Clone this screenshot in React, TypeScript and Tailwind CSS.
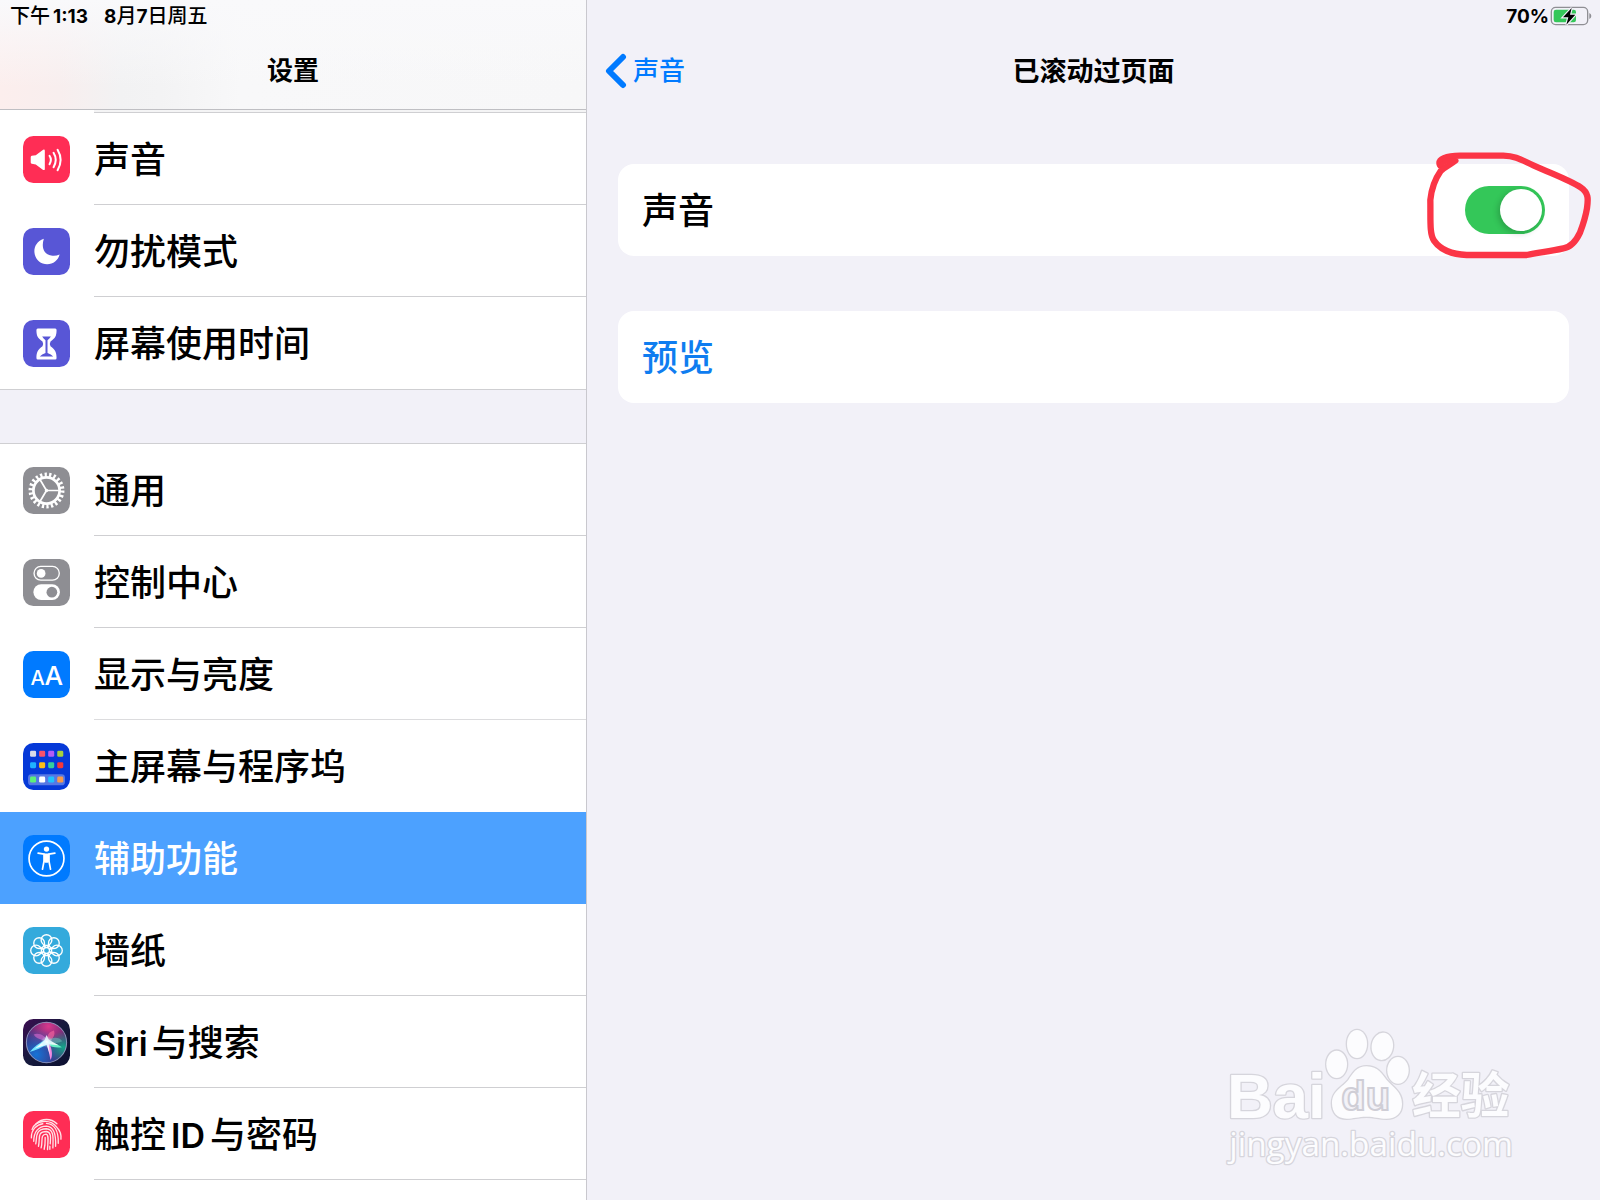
import { useState } from 'react';
import type { ReactNode } from 'react';

interface IconProps {
  color: string;
  children: ReactNode;
}

function IconTile({ color, children }: IconProps) {
  return (
    <svg viewBox="0 0 140 140" className="w-[47px] h-[47px] shrink-0" aria-hidden="true">
      <rect width="140" height="140" rx="31" fill={color} />
      {children}
    </svg>
  );
}

function SoundIcon() {
  return (
    <IconTile color="#ff2d55">
      <path d="M26 59L38 57L60 41Q65 39 65 44V98Q65 103 60 101L38 85L26 83Q23 82 23 79V63Q23 60 26 59Z" fill="#fff" />
      <path d="M79 59Q87 71 79 84M91 50Q104 71 91 93M103 41Q121 71 103 102" fill="none" stroke="#fff" strokeWidth="6" strokeLinecap="round" />
    </IconTile>
  );
}

function MoonIcon() {
  return (
    <IconTile color="#5856d6">
      <path d="M62 32C40 40 33 57 34 72C36 94 52 108 72 108C90 108 105 96 109 79C100 83 92 84 84 82C62 77 54 58 62 32Z" fill="#fff" />
    </IconTile>
  );
}

function HourglassIcon() {
  return (
    <IconTile color="#5856d6">
      <path d="M44 25H96Q100 25 100 30C100 48 96 54 82 64Q78 71 82 78C96 88 100 96 100 113Q100 118 96 118H44Q40 118 40 113C40 96 44 88 58 78Q62 71 58 64C44 54 40 48 40 30Q40 25 44 25Z" fill="#fff" />
      <path d="M57 49H83Q79 55 73 60V98Q84 101 90 109H50Q56 101 67 98V60Q61 55 57 49Z" fill="#5856d6" />
    </IconTile>
  );
}

function GearIcon() {
  return (
    <IconTile color="#8e8e93">
      <g fill="none" stroke="#fff">
        <circle cx="70" cy="70" r="47" strokeWidth="13" pathLength="44" strokeDasharray="1 1" />
        <circle cx="70" cy="70" r="39" strokeWidth="8" />
        <path d="M70 70H107M70 70L51 38M70 70L51 102" strokeWidth="5" />
      </g>
      <circle cx="70" cy="70" r="5" fill="#fff" />
    </IconTile>
  );
}

function ControlIcon() {
  return (
    <IconTile color="#8e8e93">
      <rect x="33" y="22" width="75" height="41" rx="20" fill="none" stroke="#fff" strokeWidth="4" />
      <circle cx="54" cy="43" r="13" fill="#fff" />
      <rect x="31" y="75" width="79" height="47" rx="23" fill="#fff" />
      <circle cx="86" cy="99" r="16" fill="#8e8e93" />
    </IconTile>
  );
}

function DisplayIcon() {
  return (
    <IconTile color="#007aff">
      <g fill="#fff" fontFamily="Inter, sans-serif" fontWeight="500">
        <text x="22" y="100" fontSize="60">A</text>
        <text x="64" y="100" fontSize="78">A</text>
      </g>
    </IconTile>
  );
}

const appColors = [
  ['#d9dbe8', '#f8526b', '#b45cf5', '#a6d13c'],
  ['#1fb2ff', '#fcbf16', '#35cf9b', '#f4383a'],
];
const dockColors = ['#5df178', '#ffffff', '#1fc2ff', '#f79a4c'];

function HomeScreenIcon() {
  return (
    <IconTile color="#0639d8">
      <rect x="15" y="93" width="110" height="33" rx="10" fill="#fff" fillOpacity="0.32" />
      {appColors.map((row, y) =>
        row.map((fill, x) => (
          <rect key={fill} x={21 + x * 27} y={23 + y * 34} width="18" height="18" rx="4" fill={fill} />
        ))
      )}
      {dockColors.map((fill, x) => (
        <rect key={fill} x={21 + x * 27} y="100" width="18" height="18" rx="4" fill={fill} />
      ))}
    </IconTile>
  );
}

function AccessibilityIcon() {
  return (
    <IconTile color="#007aff">
      <circle cx="70" cy="70" r="52" fill="none" stroke="#fff" strokeWidth="5" />
      <circle cx="70" cy="42" r="8" fill="#fff" />
      <path d="M45 54L63 57V76L58 102M95 54L77 57V76L82 102" fill="none" stroke="#fff" strokeWidth="5" strokeLinecap="round" strokeLinejoin="round" />
      <path d="M61 55H79V76L75 83H65L61 76Z" fill="#fff" />
    </IconTile>
  );
}

function WallpaperIcon() {
  return (
    <IconTile color="#34aadc">
      <g fill="none" stroke="#fff" strokeWidth="4">
        {[0, 45, 90, 135, 180, 225, 270, 315].map((angle) => (
          <g key={angle} transform={`rotate(${angle} 70 70)`}>
            <circle cx="70" cy="39" r="16" />
            <path d="M64 53Q64 60 67 62M76 53Q76 60 73 62" />
          </g>
        ))}
        <circle cx="70" cy="70" r="9" />
      </g>
    </IconTile>
  );
}

function SiriIcon() {
  return (
    <svg viewBox="0 0 140 140" className="w-[47px] h-[47px] shrink-0" aria-hidden="true">
      <defs>
        <linearGradient id="siriBack" x1="0" y1="0" x2="1" y2="1">
          <stop offset="0" stopColor="#3c0d51" />
          <stop offset="0.5" stopColor="#161a3d" />
          <stop offset="1" stopColor="#0c1030" />
        </linearGradient>
        <radialGradient id="siriPink" cx="0.55" cy="0.1" r="0.6">
          <stop offset="0" stopColor="#d8388c" />
          <stop offset="1" stopColor="#d8388c" stopOpacity="0" />
        </radialGradient>
        <radialGradient id="siriBlue" cx="0.25" cy="0.8" r="0.65">
          <stop offset="0" stopColor="#1673d6" />
          <stop offset="1" stopColor="#1673d6" stopOpacity="0" />
        </radialGradient>
        <radialGradient id="siriGreen" cx="0.92" cy="0.62" r="0.4">
          <stop offset="0" stopColor="#14a78b" />
          <stop offset="1" stopColor="#14a78b" stopOpacity="0" />
        </radialGradient>
        <radialGradient id="siriGlow">
          <stop offset="0" stopColor="#fff" />
          <stop offset="1" stopColor="#9fe9ff" stopOpacity="0" />
        </radialGradient>
      </defs>
      <rect width="140" height="140" rx="31" fill="url(#siriBack)" />
      <circle cx="70" cy="70" r="60" fill="#46246f" />
      <circle cx="70" cy="70" r="60" fill="url(#siriPink)" />
      <circle cx="70" cy="70" r="60" fill="url(#siriBlue)" />
      <circle cx="70" cy="70" r="60" fill="url(#siriGreen)" />
      <circle cx="70" cy="70" r="60" fill="none" stroke="#a9b4d6" strokeOpacity="0.75" strokeWidth="3" />
      <path d="M70 70C60 60 38 60 32 46C48 40 68 50 74 68Z" fill="#d86ad1" fillOpacity="0.6" />
      <path d="M72 68C70 50 76 38 92 34C98 48 88 58 78 70Z" fill="#f0629c" fillOpacity="0.7" />
      <path d="M72 64C90 52 108 54 117 66C104 72 90 72 76 72Z" fill="#6fd8c8" fillOpacity="0.45" />
      <path d="M66 62C48 72 32 84 20 98C38 94 56 84 74 76Z" fill="#6fe3ff" />
      <path d="M72 66C90 70 106 76 116 84C100 86 84 84 70 76Z" fill="#64efc4" />
      <path d="M70 72C75 86 78 104 82 122C90 108 86 88 78 72Z" fill="#f08ae0" />
      <path d="M70 48L77 62L106 78L77 75L80 106L70 77L36 88L64 64Z" fill="#fff" fillOpacity="0.85" />
      <circle cx="71" cy="68" r="18" fill="url(#siriGlow)" />
    </svg>
  );
}

function TouchIdIcon() {
  return (
    <IconTile color="#ff2d55">
      <g fill="none" stroke="#ffe3e8" strokeWidth="4" strokeLinecap="round">
        <path d="M39 38C57 21 83 21 101 38" />
        <path d="M27 55C37 27 81 22 101 49C112 60 114 74 113 84" />
        <path d="M25 80C24 55 42 40 59 38M70 37C92 38 106 58 105 96" />
        <path d="M32 90C32 62 46 45 70 45C90 46 99 64 97 105" />
        <path d="M38 98C42 82 34 53 70 53C93 55 90 80 89 110" />
        <path d="M46 105C52 82 40 61 70 61C86 63 82 84 81 98M80 105V114" />
        <path d="M54 110C60 90 50 70 69 69C78 71 74 92 73 115" />
        <path d="M63 114C67 98 66 90 66 79" />
      </g>
    </IconTile>
  );
}

interface SettingItem {
  label: ReactNode;
  icon: ReactNode;
  line: string;
  selected?: boolean;
}

const alertItems: SettingItem[] = [
  { label: '声音', icon: <SoundIcon />, line: 'border-[#cfcfd2]' },
  { label: '勿扰模式', icon: <MoonIcon />, line: 'border-[#cfcfd2]' },
  { label: '屏幕使用时间', icon: <HourglassIcon />, line: 'border-transparent' },
];

const generalItems: SettingItem[] = [
  { label: '通用', icon: <GearIcon />, line: 'border-[#cfcfd2]' },
  { label: '控制中心', icon: <ControlIcon />, line: 'border-[#cfcfd2]' },
  { label: '显示与亮度', icon: <DisplayIcon />, line: 'border-[#dcdcde]' },
  { label: '主屏幕与程序坞', icon: <HomeScreenIcon />, line: 'border-transparent' },
  { label: '辅助功能', icon: <AccessibilityIcon />, line: 'border-transparent', selected: true },
  { label: '墙纸', icon: <WallpaperIcon />, line: 'border-[#cfcfd2]' },
  {
    label: <><span className="mr-1 text-[34px] font-semibold">Siri</span>与搜索</>,
    icon: <SiriIcon />,
    line: 'border-[#cfcfd2]',
  },
  {
    label: <>触控<span className="mx-[5px] text-[34px] font-semibold">ID</span>与密码</>,
    icon: <TouchIdIcon />,
    line: 'border-[#cfcfd2]',
  },
];

function SettingRow({ item }: { item: SettingItem }) {
  return (
    <li>
      <a
        href="#"
        aria-current={item.selected ? 'page' : undefined}
        className={`flex h-[92px] items-center gap-6 pl-[23px] ${item.selected ? 'bg-[#4ca1ff] text-white' : 'bg-white text-black'}`}
      >
        {item.icon}
        <span className={`flex h-full flex-1 items-center border-b pt-0.5 text-[36px] leading-none ${item.line}`}>
          <span>{item.label}</span>
        </span>
      </a>
    </li>
  );
}

function Battery() {
  return (
    <svg viewBox="0 0 126 60" className="h-5 w-[42px]" aria-hidden="true">
      <rect x="4" y="4" width="109" height="52" rx="13" fill="none" stroke="#8f8f94" strokeWidth="4" />
      <path d="M118 21Q124 24 124 30Q124 36 118 39Z" fill="#8f8f94" />
      <rect x="11" y="11" width="67" height="38" rx="7" fill="#34c759" />
      <path d="M65 6L39 34H55L49 56L76 26H60Z" fill="#000" stroke="#f2f1f8" strokeWidth="7" paintOrder="stroke" />
    </svg>
  );
}

function Watermark() {
  return (
    <svg
      viewBox="60 60 900 450"
      className="pointer-events-none absolute right-20 bottom-[30px] h-[150px] w-[300px]"
      role="img"
      aria-label="Baidu 经验"
    >
      <g fill="#fcfcfe" stroke="#d6d5dc" strokeWidth="8" paintOrder="stroke" strokeLinejoin="round">
        <text x="81" y="353" fontSize="190" fontWeight="700" fontFamily="'Liberation Sans', sans-serif">Bai</text>
        <ellipse cx="410" cy="193" rx="31" ry="41" />
        <ellipse cx="471" cy="132" rx="30" ry="42" />
        <ellipse cx="547" cy="139" rx="32" ry="41" transform="rotate(8 547 139)" />
        <ellipse cx="594" cy="211" rx="32" ry="40" />
        <path d="M500 199C535 199 548 225 560 240C580 262 606 276 606 312C606 340 588 356 560 356C535 356 525 350 500 350C475 350 460 356 440 356C412 356 396 338 396 310C396 272 428 262 445 240C458 222 468 199 500 199Z" />
        <text x="636" y="338" fontSize="146" fontWeight="700" fontFamily="'Noto Sans CJK SC', sans-serif">经验</text>
        <text x="88" y="467" fontSize="100" fontFamily="'Open Sans', sans-serif">jingyan.baidu.com</text>
      </g>
      <text x="424" y="331" fontSize="120" fontWeight="700" fontFamily="'Liberation Sans', sans-serif" fill="#f3f2f8" stroke="#cfced6" strokeWidth="6">du</text>
    </svg>
  );
}

export default function App() {
  const [soundOn, setSoundOn] = useState(true);

  return (
    <div className="flex min-h-screen bg-[#f2f1f8] font-['Inter','Noto_Sans_CJK_SC',sans-serif] font-medium text-black">
      <aside className="flex w-[587px] shrink-0 flex-col border-r border-[#c9c8ce]">
        <header className="h-[110px] border-b border-[#bfbfc3] bg-[linear-gradient(180deg,#f9f9fb_0%,#f9f9fb00_80%),linear-gradient(90deg,#fceeed_0px,#f8eeee_60px,#f2f2f3_120px,#f3f3f4_160px,#f8f8f9_240px,#f7f7f8_100%)]">
          <div className="flex h-8 items-center gap-4 pl-[10px] text-[20px] leading-none">
            <span>下午<span className="ml-[3px] text-[19px] font-bold">1:13</span></span>
            <span>
              <span className="text-[19px] font-bold">8</span>月<span className="text-[19px] font-bold">7</span>日周五
            </span>
          </div>
          <h1 className="flex h-[78px] items-center justify-center text-[26px] leading-none font-semibold">设置</h1>
        </header>
        <nav className="flex flex-1 flex-col bg-white" aria-label="设置">
          <div className="ml-[94px] h-[3px] border-b border-[#cfcfd2] bg-[#f4f4f5]" />
          <ul>
            {alertItems.map((item, i) => (
              <SettingRow key={i} item={item} />
            ))}
          </ul>
          <div className="h-[55px] border-y border-[#cfcfd2] bg-[#f2f1f8]" />
          <ul>
            {generalItems.map((item, i) => (
              <SettingRow key={i} item={item} />
            ))}
          </ul>
        </nav>
      </aside>

      <main className="relative flex flex-1 flex-col">
        <div className="flex h-8 items-center justify-end gap-px pr-2 text-[19px] leading-none font-bold">
          <span>70%</span>
          <Battery />
        </div>
        <header className="grid h-[78px] grid-cols-[1fr_auto_1fr] items-center px-[18px] text-[27px] leading-none">
          <button type="button" className="flex items-center gap-1 justify-self-start text-[26px] text-[#007aff]">
            <svg viewBox="0 0 24 38" className="h-[38px] w-6" fill="none" stroke="currentColor" strokeWidth="6" strokeLinecap="round" strokeLinejoin="round" aria-hidden="true">
              <path d="M18 5L4 19L18 33" />
            </svg>
            声音
          </button>
          <h2 className="font-semibold">已滚动过页面</h2>
        </header>

        <div className="flex flex-col gap-[55px] px-[31px] pt-[54px]">
          <div className="relative flex h-[92px] items-center justify-between rounded-2xl bg-white px-6 text-[36px] leading-none">
            <label htmlFor="page-sound" className="pt-0.5">声音</label>
            <input
              id="page-sound"
              type="checkbox"
              role="switch"
              checked={soundOn}
              onChange={(e) => setSoundOn(e.target.checked)}
              className="h-12 w-20 cursor-pointer appearance-none rounded-full bg-gray-200 p-[3px] before:block before:size-[42px] before:rounded-full before:bg-white before:shadow-[-2px_2px_6px_rgba(0,0,0,0.2)] before:content-[''] checked:bg-[#34c759] checked:pl-[35px]"
            />
            <svg viewBox="72 450 516 330" className="pointer-events-none absolute -top-[14px] -right-[27px] h-[110px] w-[172px]" aria-hidden="true">
              <path
                d="M120 496C112 478 140 467 180 467H310C350 468 368 482 400 496C460 523 510 541 542 562C566 578 565 596 561 625C556 655 550 672 540 698C525 730 510 742 490 745C450 754 420 757 380 765H200C150 763 120 748 102 722C88 702 92 660 91 600C95 560 110 530 122 513C135 500 150 495 166 482"
                fill="none"
                stroke="#fb3546"
                strokeWidth="19"
                strokeLinecap="round"
                strokeLinejoin="round"
              />
              <path d="M120 496L140 482L166 482" fill="none" stroke="#fb3546" strokeWidth="14" strokeLinecap="round" strokeLinejoin="round" />
            </svg>
          </div>
          <button type="button" className="flex h-[92px] items-center rounded-2xl bg-white px-6 pt-0.5 text-[36px] leading-none text-[#0f7df0]">
            预览
          </button>
        </div>

        <Watermark />
      </main>
    </div>
  );
}
